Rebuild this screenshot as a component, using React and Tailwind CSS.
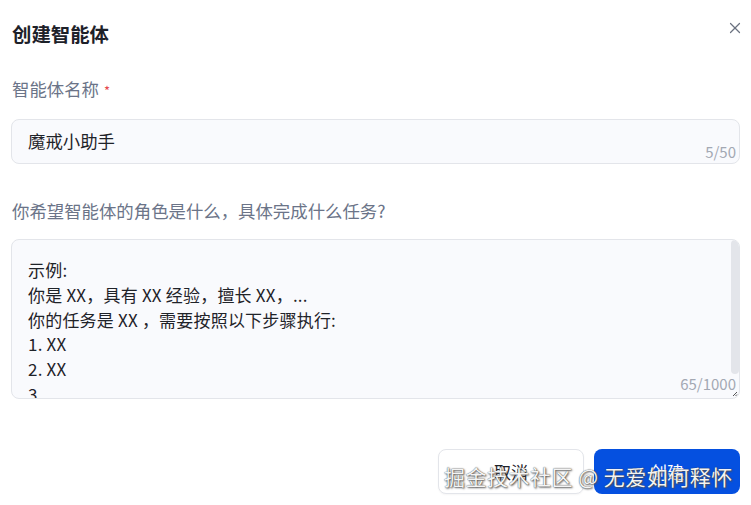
import { X } from 'lucide-react';

const lines = [
  '示例:',
  '你是 XX，具有 XX 经验，擅长 XX，...',
  '你的任务是 XX ，需要按照以下步骤执行:',
  '1. XX',
  '2. XX',
  '3.',
];

export default function App() {
  return (
    <div className="relative w-[751px] h-[505px] bg-white overflow-hidden font-['Noto_Sans_CJK_SC','Noto_Sans',sans-serif] text-[#1f2329]">
      <div className="flex items-center justify-between pl-3 pr-[7px] pt-[19px] h-[48px]">
        <h1 className="text-[19.4px] font-bold text-[#1d2129] leading-[28px]">创建智能体</h1>
        <X className="w-[18px] h-[18px] text-[#6b7280] -mt-[11px]" strokeWidth={1.6} />
      </div>

      <div className="px-[11px]">
        <div className="mt-[29px] text-[17.4px] leading-[24px] text-[#6b7488] pl-[1px]">
          智能体名称<span className="text-[#e5484d] text-[13px] ml-[5px]">*</span>
        </div>
        <div className="relative mt-[16px] h-[45px] rounded-[8px] border border-[#e3e5ea] bg-[#f9fafd] flex items-center pl-[16px]">
          <span className="text-[17.4px] leading-[24px] -mt-[2px]">魔戒小助手</span>
          <span className="absolute right-[3px] bottom-[3px] text-[15px] leading-[16px] text-[#a3a8b3]">5/50</span>
        </div>

        <div className="mt-[35px] text-[17.4px] leading-[24px] text-[#6b7488] pl-[1px]">
          你希望智能体的角色是什么，具体完成什么任务?
        </div>
        <div className="relative mt-[16px] h-[160px] rounded-[8px] border border-[#e3e5ea] bg-[#f9fafd] overflow-hidden">
          <div className="pt-[18px] pl-[16px] text-[17px] leading-[24.8px] tracking-[0.2px]">
            {lines.map((l) => (
              <div key={l}>{l}</div>
            ))}
          </div>
          <div className="absolute right-0 top-0 w-[8px] h-[134px] bg-[#e3e5ea] rounded-[4px]" />
          <span className="absolute right-[3px] bottom-[6px] text-[15px] leading-[16px] text-[#a3a8b3] bg-[#f9fafd]">65/1000</span>
          <svg className="absolute right-[1px] bottom-[1px]" width="6" height="6" viewBox="0 0 6 6">
            <path d="M5 1L1 5M5 3.5L3.5 5" stroke="#555" strokeWidth="1" />
          </svg>
        </div>
      </div>

      <div className="flex justify-end gap-[10px] pr-[11px] mt-[50px]">
        <button className="w-[146px] h-[45px] rounded-[8px] border border-[#e3e5ea] bg-white text-[17px] text-[#1f2329] shadow-[0_1px_2px_rgba(0,0,0,0.04)]">
          取消
        </button>
        <button className="w-[146px] h-[45px] rounded-[8px] bg-[#0550e0] text-[17px] text-white">
          创建
        </button>
      </div>

      <div className="absolute left-[444px] top-[461px] text-[21px] leading-[30px] text-[#f4f4f4] tracking-[0.5px] [text-shadow:0_0_1px_#333,1px_1px_2px_#555] pointer-events-none whitespace-nowrap">
        掘金技术社区 @ 无爱如何释怀
      </div>
    </div>
  );
}
